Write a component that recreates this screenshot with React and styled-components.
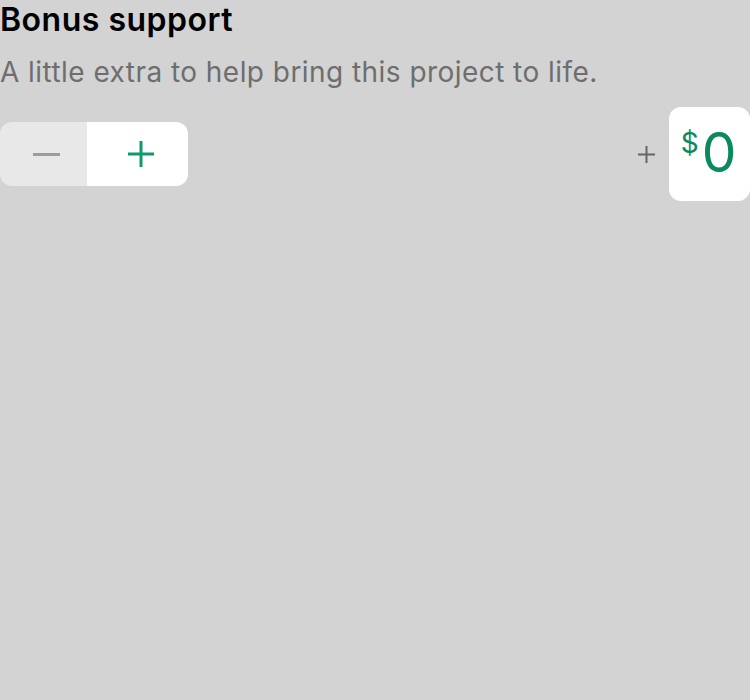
import React, { useState } from 'react';
import styled, { createGlobalStyle } from 'styled-components';

const GlobalStyle = createGlobalStyle`
  html, body {
    margin: 0;
    padding: 0;
    background: #d3d3d3;
  }
  body {
    font-family: Inter, "Noto Sans", sans-serif;
  }
`;

const Page = styled.div`
  width: 750px;
  height: 700px;
  background: #d3d3d3;
`;

const Title = styled.h2`
  margin: 0;
  font-size: 32px;
  font-weight: 600;
  line-height: 40px;
  color: #000;
  letter-spacing: 0.5px;
`;

const Subtitle = styled.p`
  margin: 15px 0 0;
  font-size: 28px;
  line-height: 34px;
  color: #6e6e6e;
  letter-spacing: 0.45px;
`;

const Controls = styled.div`
  display: flex;
  align-items: center;
  justify-content: space-between;
  margin-top: 18px;
`;

const Stepper = styled.div`
  display: flex;
  height: 64px;
  border-radius: 12px;
  overflow: hidden;
`;

const StepButton = styled.button`
  border: none;
  padding: 0 0 0 6px;
  display: flex;
  align-items: center;
  justify-content: center;
  width: ${p => p.$width}px;
  height: 100%;
  background: ${p => (p.$disabled ? '#e8e8e8' : '#fff')};
  color: ${p => (p.$disabled ? '#9c9c9c' : '#0e9a70')};
  cursor: pointer;

  &:focus {
    outline: none;
  }
`;

const Amount = styled.div`
  display: flex;
  align-items: center;
  gap: 14px;
`;

const PlusSign = styled.span`
  display: flex;
  color: #666;
`;

const AmountBox = styled.div`
  display: flex;
  align-items: flex-start;
  justify-content: center;
  gap: 3px;
  width: 81px;
  height: 94px;
  padding-right: 2px;
  background: #fff;
  border-radius: 12px;
  box-sizing: border-box;
  color: #0a8a5c;
`;

const Currency = styled.span`
  font-size: 28px;
  line-height: 1;
  margin-top: 22px;
`;

const Value = styled.span`
  font-size: 55px;
  line-height: 1;
  margin-top: 18px;
  font-weight: 400;
`;

const MinusIcon = () => (
  <svg width="27" height="3" viewBox="0 0 27 3">
    <rect x="0" y="0" width="27" height="3" fill="currentColor" />
  </svg>
);

const PlusIcon = ({ size = 26, stroke = 3 }) => (
  <svg width={size} height={size} viewBox={`0 0 ${size} ${size}`}>
    <rect x="0" y={(size - stroke) / 2} width={size} height={stroke} fill="currentColor" />
    <rect x={(size - stroke) / 2} y="0" width={stroke} height={size} fill="currentColor" />
  </svg>
);

export default function App() {
  const [amount, setAmount] = useState(0);

  return (
    <Page>
      <GlobalStyle />
      <Title>Bonus support</Title>
      <Subtitle>A little extra to help bring this project to life.</Subtitle>
      <Controls>
        <Stepper>
          <StepButton
            $width={87}
            $disabled={amount === 0}
            onClick={() => setAmount(a => Math.max(0, a - 1))}
          >
            <MinusIcon />
          </StepButton>
          <StepButton $width={101} onClick={() => setAmount(a => a + 1)}>
            <PlusIcon />
          </StepButton>
        </Stepper>
        <Amount>
          <PlusSign>
            <PlusIcon size={17} stroke={2} />
          </PlusSign>
          <AmountBox>
            <Currency>$</Currency>
            <Value>{amount}</Value>
          </AmountBox>
        </Amount>
      </Controls>
    </Page>
  );
}
